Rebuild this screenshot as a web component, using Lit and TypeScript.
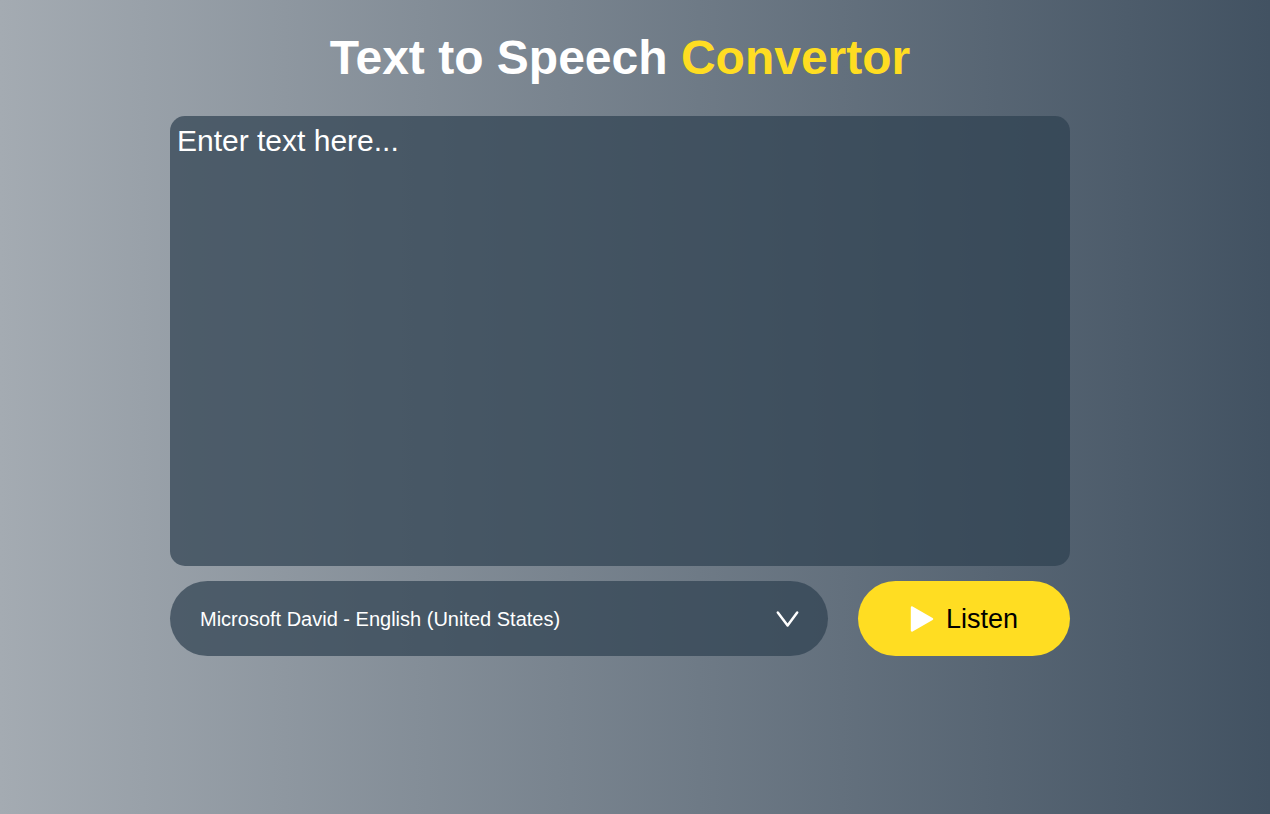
import { LitElement, html, css } from "lit";
import { customElement, state } from "lit/decorators.js";

@customElement("app-root")
export class AppRoot extends LitElement {
  static styles = css`
    :host {
      display: block;
      box-sizing: border-box;
      min-height: 100vh;
      padding: 30px 30px 30px 0;
      background: linear-gradient(to right, #a4abb2, #425262);
      font-family: Arial, "Liberation Sans", sans-serif;
      color: #fff;
    }
    .converter {
      max-width: 900px;
      margin: 0 auto;
    }
    .title {
      margin: 0 0 30px;
      font-size: 48px;
      line-height: 56px;
      font-weight: 700;
      text-align: center;
    }
    .accent {
      color: #ffdd22;
    }
    .text,
    .voice {
      display: block;
      box-sizing: border-box;
      border: 0;
      outline: 0;
      color: #fff;
      font-family: inherit;
      background-color: rgba(46, 64, 80, 0.7);
    }
    .text {
      width: 100%;
      height: 450px;
      margin-bottom: 15px;
      padding: 8px 7px;
      border-radius: 15px;
      font-size: 30px;
      line-height: 34px;
      resize: none;
    }
    .text::placeholder {
      color: #fff;
      opacity: 1;
    }
    .controls {
      display: flex;
      gap: 30px;
    }
    .picker {
      flex: 1;
      display: grid;
      align-items: center;
    }
    .voice {
      grid-area: 1 / 1;
      width: 100%;
      height: 75px;
      padding: 0 60px 0 30px;
      border-radius: 38px;
      font-size: 20px;
      appearance: none;
    }
    .voice option {
      color: #000;
    }
    .chevron {
      grid-area: 1 / 1;
      justify-self: end;
      width: 24px;
      height: 18px;
      margin-right: 28px;
      pointer-events: none;
    }
    .listen {
      display: flex;
      align-items: center;
      justify-content: center;
      gap: 12px;
      width: 212px;
      height: 75px;
      padding: 0;
      border: 0;
      border-radius: 38px;
      background: #ffdd22;
      color: #000;
      font-family: inherit;
      font-size: 27px;
      line-height: 32px;
      cursor: pointer;
    }
    .play {
      width: 24px;
      height: 26px;
    }
  `;

  @state() private text = "";

  private onInput(e: Event) {
    this.text = (e.target as HTMLTextAreaElement).value;
  }

  private speak() {
    if (this.text) {
      speechSynthesis.speak(new SpeechSynthesisUtterance(this.text));
    }
  }

  render() {
    return html`
      <main class="converter">
        <h1 class="title">Text to Speech <span class="accent">Convertor</span></h1>
        <textarea
          class="text"
          aria-label="Text to speak"
          placeholder="Enter text here..."
          .value=${this.text}
          @input=${this.onInput}
        ></textarea>
        <div class="controls">
          <div class="picker">
            <select class="voice" aria-label="Voice">
              <option>Microsoft David - English (United States)</option>
            </select>
            <svg class="chevron" viewBox="0 0 24 18" aria-hidden="true">
              <path
                d="M1.8 2.6 L11.6 15.4 L21.2 2.6"
                fill="none"
                stroke="#fff"
                stroke-width="2.5"
                stroke-linecap="round"
                stroke-linejoin="round"
              />
            </svg>
          </div>
          <button class="listen" type="button" @click=${this.speak}>
            <svg class="play" viewBox="0 0 24 26" aria-hidden="true">
              <path
                d="M2 1.5 L22 13 L2 24.5 Z"
                fill="#fff"
                stroke="#fff"
                stroke-width="2.4"
                stroke-linejoin="round"
              />
            </svg>
            <span>Listen</span>
          </button>
        </div>
      </main>
    `;
  }
}
